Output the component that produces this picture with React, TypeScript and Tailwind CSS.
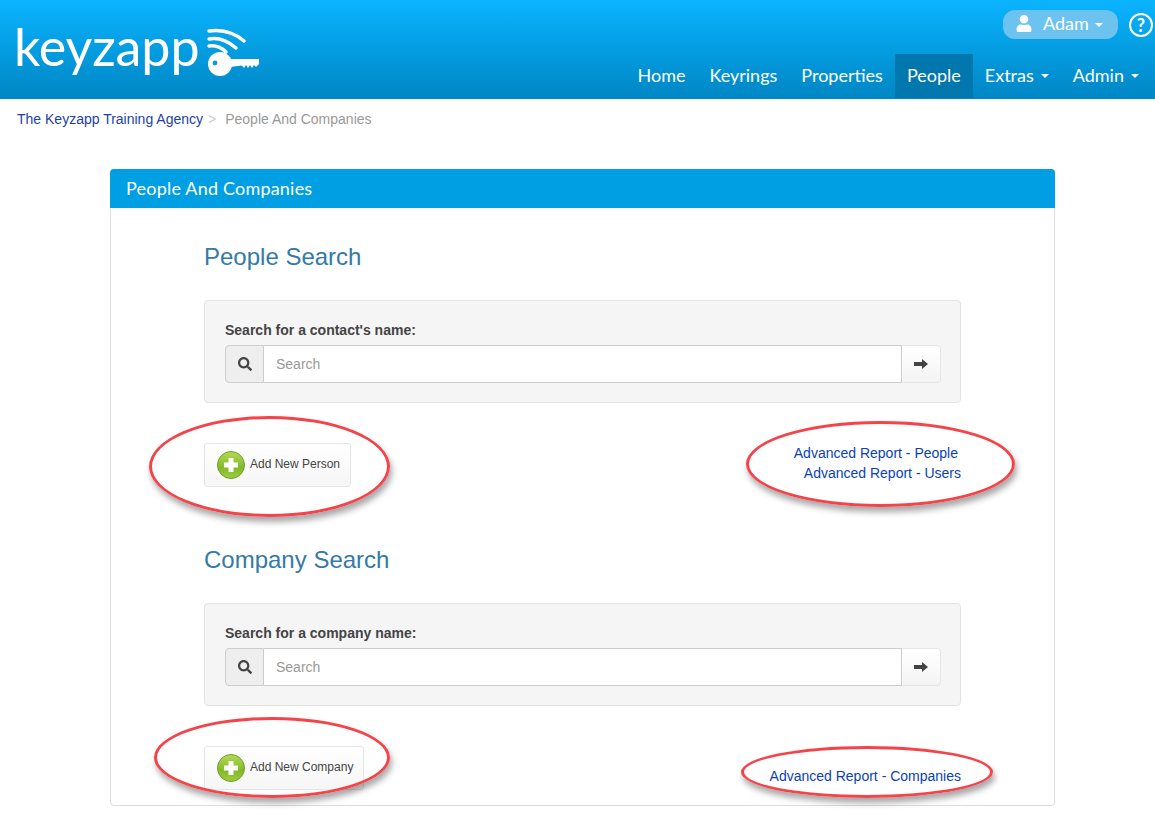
import { FaSearch, FaUser } from "react-icons/fa";

function Logo() {
  return (
    <div className="flex items-start pl-[14px] pt-[10px]">
      <span className="w-[192px] font-['Lato'] text-[52px] font-normal leading-[72px] tracking-[-0.1px] text-white">
        keyzapp
      </span>
      <svg width="56" height="52" viewBox="0 0 56 52" className="mt-[17px]">
        <g fill="none" stroke="#fff" strokeWidth="3.4" strokeLinecap="round">
          <path d="M3 4 C18 2 30 7 38 14" />
          <path d="M3 12 C14 10 23 15 30 21" />
          <path d="M3 19 C10 18 16 21 20 25" />
        </g>
        <circle cx="14" cy="37" r="12" fill="#fff" />
        <circle cx="9" cy="36" r="2.4" fill="#0a9ce0" />
        <path
          d="M22 32 L53 32 L53 37 L50 40 L48 38 L46 41 L44 38 L42 41 L40 38 L38 41 L36 38.5 L24 40 Z"
          fill="#fff"
        />
      </svg>
    </div>
  );
}

function NavItem({ label, active, caret }: { label: string; active?: boolean; caret?: boolean }) {
  return (
    <a
      className={
        active
          ? "flex h-[44px] items-center bg-[#0077ad] px-[12px] pb-[2px] text-white"
          : "flex h-[44px] items-center px-[12px] pb-[2px] text-white"
      }
    >
      {label}
      {caret && <span className="ml-[7px] mt-[2px] border-x-[4px] border-t-[4px] border-x-transparent border-t-white" />}
    </a>
  );
}

function Header() {
  return (
    <header className="flex h-[99px] justify-between bg-gradient-to-b from-[#0bb4ff] to-[#0086c4] font-['Lato']">
      <Logo />
      <div className="flex flex-col items-end">
        <div className="flex h-[54px] items-start gap-[11px] pr-[2px] pt-[10px]">
          <div className="flex h-[29px] w-[115px] items-center rounded-[12px] bg-[#6cc3ef] pb-[2px] pl-[12px] text-[18px] text-white">
            <FaUser className="mr-[10px] h-[17px] w-[18px]" />
            Adam
            <span className="ml-[6px] mt-[2px] border-x-[4px] border-t-[4px] border-x-transparent border-t-white" />
          </div>
          <div className="mt-[3px] flex h-[24px] w-[24px] items-center justify-center rounded-full border-2 border-white text-[18px] font-bold text-white">
            ?
          </div>
        </div>
        <nav className="flex pr-[4px] text-[18px]">
          <NavItem label="Home" />
          <NavItem label="Keyrings" />
          <NavItem label="Properties" />
          <NavItem label="People" active />
          <NavItem label="Extras" caret />
          <NavItem label="Admin" caret />
        </nav>
      </div>
    </header>
  );
}

function SearchWell({ label }: { label: string }) {
  return (
    <div className="mt-[30px] rounded-[4px] border border-[#e3e3e3] bg-[#f5f5f5] pb-[19px] pl-[20px] pr-[19px] pt-[20px]">
      <div className="mb-[5px] text-[14px] font-bold leading-[19px] text-[#444]">{label}</div>
      <div className="flex h-[38px]">
        <div className="flex w-[39px] items-center justify-center rounded-l-[4px] border border-[#ccc] bg-[#eee] text-[#444]">
          <FaSearch className="h-[14px] w-[14px]" />
        </div>
        <div className="flex flex-1 items-center border-y border-r border-[#ccc] bg-white pl-[12px] text-[14px] text-[#999]">
          Search
        </div>
        <div className="flex w-[39px] items-center justify-center rounded-r-[4px] border-y border-r border-[#e6e6e6] bg-gradient-to-b from-white to-[#f4f4f4]">
          <svg width="14" height="10" viewBox="0 0 14 10">
            <path d="M0 3 H8 V0 L14 5 L8 10 V7 H0 Z" fill="#444" />
          </svg>
        </div>
      </div>
    </div>
  );
}

function AddButton({ label, width, id }: { label: string; width: string; id: string }) {
  return (
    <div
      className={`flex h-[44px] ${width} items-center rounded-[3px] border border-[#e6e6e6] bg-gradient-to-b from-white to-[#f6f6f6] pl-[12px] text-[12px] text-[#444]`}
    >
      <svg width="28" height="28" viewBox="0 0 28 28" className="mr-[5px] shrink-0">
        <defs>
          <linearGradient id={id} x1="0" y1="0" x2="0" y2="1">
            <stop offset="0" stopColor="#b4dc55" />
            <stop offset="0.6" stopColor="#82b82a" />
            <stop offset="1" stopColor="#a0cf3e" />
          </linearGradient>
        </defs>
        <circle cx="14" cy="14" r="13.5" fill={`url(#${id})`} stroke="#6f9e28" />
        <path d="M11.5 7 H16.5 V11.5 H21 V16.5 H16.5 V21 H11.5 V16.5 H7 V11.5 H11.5 Z" fill="#fff" />
      </svg>
      <span className="mb-[3px]">{label}</span>
    </div>
  );
}

// red hand-drawn style annotation rings sitting over the page
function Ring({ className }: { className: string }) {
  return (
    <div
      className={`pointer-events-none absolute rounded-[50%] border-[3px] border-[#f5434a] shadow-[2px_5px_6px_rgba(0,0,0,0.35)] ${className}`}
    />
  );
}

export default function App() {
  return (
    <div className="min-h-[816px] bg-white font-['Liberation_Sans',sans-serif]">
      <Header />
      <div className="flex h-[40px] items-center pl-[17px] text-[14px]">
        <a className="text-[#1c3fa8]">The Keyzapp Training Agency</a>
        <span className="ml-[5px] text-[#ccc]">&gt;</span>
        <span className="ml-[9px] text-[#999]">People And Companies</span>
      </div>

      <div className="ml-[110px] mt-[30px] w-[945px] rounded-[4px] border border-[#ddd] pb-[15px]">
        <div className="-mx-px -mt-px flex h-[39px] items-center rounded-t-[4px] bg-[#009fe3] pl-[16px] font-['Lato'] text-[18px] tracking-[0.2px] text-white">
          People And Companies
        </div>
        <div className="mx-[93px]">
          <h2 className="pt-[36px] text-[24px] leading-[26px] text-[#347aa8]">People Search</h2>
          <SearchWell label="Search for a contact's name:" />
          <div className="relative mt-[40px] flex h-[44px] justify-between">
            <AddButton label="Add New Person" width="w-[147px]" id="plusPerson" />
            <div className="flex flex-col items-end text-[14px] leading-[20px] text-[#0b3fb5]">
              <a className="mr-[3px]">Advanced Report - People</a>
              <a>Advanced Report - Users</a>
            </div>
            <Ring className="left-[-55px] top-[-27px] h-[101px] w-[241px]" />
            <Ring className="left-[542px] top-[-22px] h-[86px] w-[269px]" />
          </div>

          <h2 className="pt-[60px] text-[24px] leading-[26px] text-[#347aa8]">Company Search</h2>
          <SearchWell label="Search for a company name:" />
          <div className="relative mt-[40px] flex h-[44px] justify-between">
            <AddButton label="Add New Company" width="w-[160px]" id="plusCompany" />
            <div className="pt-[20px] text-[14px] leading-[20px] text-[#0b3fb5]">
              <a>Advanced Report - Companies</a>
            </div>
            <Ring className="left-[-50px] top-[-29px] h-[81px] w-[236px]" />
            <Ring className="left-[537px] top-[0px] h-[52px] w-[252px]" />
          </div>
        </div>
      </div>
    </div>
  );
}
